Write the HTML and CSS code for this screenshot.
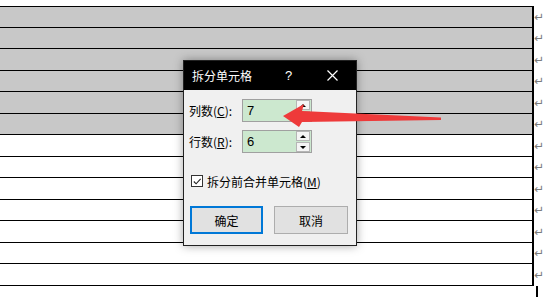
FILE: index.html
```html
<!DOCTYPE html>
<html lang="zh-CN">
<head>
<meta charset="utf-8">
<title>拆分单元格</title>
<link rel="stylesheet" href="styles.css">
</head>
<body>
<div class="page">
  <div class="table">
    <div class="row gray first"><div class="cell"></div><span class="pm">↵</span></div>
    <div class="row gray"><div class="cell"></div><span class="pm">↵</span></div>
    <div class="row gray"><div class="cell"></div><span class="pm">↵</span></div>
    <div class="row gray"><div class="cell"></div><span class="pm">↵</span></div>
    <div class="row gray"><div class="cell"></div><span class="pm">↵</span></div>
    <div class="row gray"><div class="cell"></div><span class="pm">↵</span></div>
    <div class="row"><div class="cell"></div><span class="pm">↵</span></div>
    <div class="row"><div class="cell"></div><span class="pm">↵</span></div>
    <div class="row"><div class="cell"></div><span class="pm">↵</span></div>
    <div class="row"><div class="cell"></div><span class="pm">↵</span></div>
    <div class="row"><div class="cell"></div><span class="pm">↵</span></div>
    <div class="row"><div class="cell"></div><span class="pm">↵</span></div>
    <div class="row"><div class="cell"></div><span class="pm">↵</span></div>
    <div class="row last"><div class="cell"></div></div>
  </div>

  <div class="dialog">
    <div class="titlebar">
      <span class="title">拆分单元格</span>
      <span class="help">?</span>
      <span class="close">
        <svg width="11" height="11" viewBox="0 0 11 11"><path d="M0.5 0.5 L10.5 10.5 M10.5 0.5 L0.5 10.5" stroke="#fff" stroke-width="1.2" fill="none"/></svg>
      </span>
    </div>
    <div class="body">
      <div class="field">
        <label class="lbl">列数(<u>C</u>):</label>
        <div class="spin">
          <span class="val">7</span>
          <div class="btns">
            <span class="sb"><i class="up"></i></span>
            <span class="sb"><i class="down"></i></span>
          </div>
        </div>
      </div>
      <div class="field second">
        <label class="lbl">行数(<u>R</u>):</label>
        <div class="spin">
          <span class="val">6</span>
          <div class="btns">
            <span class="sb"><i class="up"></i></span>
            <span class="sb"><i class="down"></i></span>
          </div>
        </div>
      </div>
      <div class="check">
        <span class="box">
          <svg width="11" height="11" viewBox="0 0 11 11"><path d="M2 5.5 L4.5 8 L9.5 2.5" stroke="#222" stroke-width="1.2" fill="none"/></svg>
        </span>
        <span class="ctext">拆分前合并单元格(<u>M</u>)</span>
      </div>
      <div class="buttons">
        <span class="btn primary">确定</span>
        <span class="btn">取消</span>
      </div>
    </div>
  </div>

  <svg class="arrow" width="544" height="297" viewBox="0 0 544 297">
    <polygon points="283,116 304,104 302,111 441,117.5 441,120 302,122 299,127" fill="#ee3a3a"/>
  </svg>
</div>
</body>
</html>
```

FILE: styles.css
```css
* { box-sizing: border-box; }
html, body {
  margin: 0;
  padding: 0;
  background: #fff;
  width: 544px;
  height: 297px;
  overflow: hidden;
}
.page {
  position: relative;
  width: 544px;
  height: 297px;
  font-family: "Noto Sans CJK SC", "Noto Sans", sans-serif;
}
.table {
  padding-top: 6px;
  display: flex;
  flex-direction: column;
}
.row {
  display: flex;
  align-items: center;
  height: 21.5px;
}
.cell {
  width: 538px;
  height: 100%;
  border-bottom: 1px solid #000;
  border-right: 2px solid #000;
}
.row.first .cell {
  border-top: 1px solid #000;
}
.row.gray .cell {
  background: #c8c8c8;
}
.pm {
  color: #7c7c7c;
  font-family: "DejaVu Sans", sans-serif;
  font-size: 12px;
  line-height: 1;
  margin-left: 0;
}

.dialog {
  position: absolute;
  left: 183px;
  top: 60px;
  width: 174px;
  height: 186px;
  background: #f0f0f0;
  border: 1px solid #222;
  box-shadow: 0 0 9px rgba(0, 0, 0, 0.35);
  display: flex;
  flex-direction: column;
}
.titlebar {
  height: 29px;
  background: #000;
  color: #fff;
  display: flex;
  align-items: center;
  padding-left: 8px;
  font-size: 12px;
}
.title {
  width: 93px;
}
.help {
  font-family: "Liberation Sans", sans-serif;
  font-size: 13px;
  width: 42px;
}
.close {
  display: flex;
  align-items: center;
}
.body {
  padding: 9px 0 0 5px;
  display: flex;
  flex-direction: column;
  font-size: 12px;
  color: #000;
}
.field {
  display: flex;
  align-items: center;
  height: 23px;
}
.field.second {
  margin-top: 8px;
}
.lbl {
  width: 53px;
}
.spin {
  width: 70px;
  height: 23px;
  border: 1px solid #a0a0a0;
  background: #cce8cf;
  display: flex;
  align-items: center;
  justify-content: space-between;
  padding: 0 1px 0 4px;
}
.val {
  font-family: "Liberation Sans", sans-serif;
  font-size: 13px;
}
.btns {
  display: flex;
  flex-direction: column;
  gap: 1px;
  width: 14px;
}
.sb {
  height: 10px;
  border: 1px solid #b5b5b5;
  background: #f4f4f4;
  display: flex;
  align-items: center;
  justify-content: center;
}
.up, .down {
  width: 0;
  height: 0;
  border-left: 3px solid transparent;
  border-right: 3px solid transparent;
}
.up { border-bottom: 3px solid #000; }
.down { border-top: 3px solid #000; }

.check {
  display: flex;
  align-items: center;
  margin-top: 21px;
  margin-left: 2px;
  height: 14px;
}
.box {
  width: 12px;
  height: 12px;
  border: 1px solid #333;
  background: #fff;
  display: flex;
  align-items: center;
  justify-content: center;
  margin-right: 4px;
}
.buttons {
  display: flex;
  gap: 11px;
  margin-top: 18px;
  margin-left: 1px;
}
.btn {
  width: 74px;
  height: 28px;
  background: #e1e1e1;
  border: 1px solid #adadad;
  display: flex;
  align-items: center;
  justify-content: center;
}
.btn.primary {
  width: 73px;
  border: 2px solid #0078d7;
}
.arrow {
  position: absolute;
  left: 0;
  top: 0;
  pointer-events: none;
}
```
